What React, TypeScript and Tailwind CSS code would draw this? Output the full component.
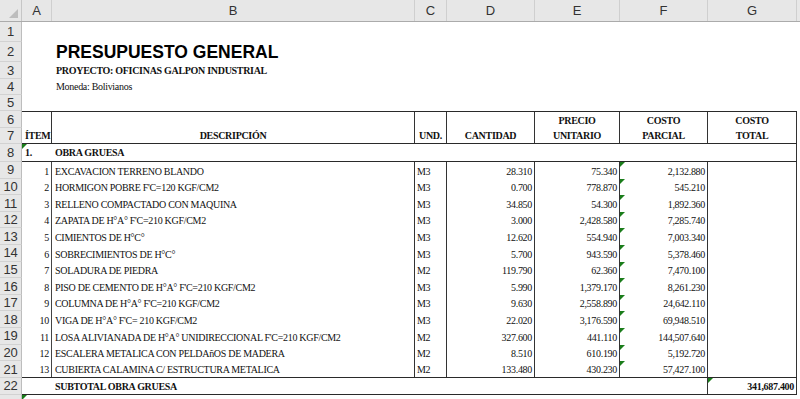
import React from 'react';

type Item = [number, string, string, string, string, string];

const items: Item[] = [
  [1, 'EXCAVACION TERRENO BLANDO', 'M3', '28.310', '75.340', '2,132.880'],
  [2, "HORMIGON POBRE F'C=120 KGF/CM2", 'M3', '0.700', '778.870', '545.210'],
  [3, 'RELLENO COMPACTADO CON MAQUINA', 'M3', '34.850', '54.300', '1,892.360'],
  [4, "ZAPATA DE H°A° F'C=210 KGF/CM2", 'M3', '3.000', '2,428.580', '7,285.740'],
  [5, 'CIMIENTOS DE H°C°', 'M3', '12.620', '554.940', '7,003.340'],
  [6, 'SOBRECIMIENTOS DE H°C°', 'M3', '5.700', '943.590', '5,378.460'],
  [7, 'SOLADURA DE PIEDRA', 'M2', '119.790', '62.360', '7,470.100'],
  [8, "PISO DE CEMENTO DE H°A° F'C=210 KGF/CM2", 'M3', '5.990', '1,379.170', '8,261.230'],
  [9, "COLUMNA DE H°A° F'C=210 KGF/CM2", 'M3', '9.630', '2,558.890', '24,642.110'],
  [10, "VIGA DE H°A° F'C= 210 KGF/CM2", 'M3', '22.020', '3,176.590', '69,948.510'],
  [11, "LOSA ALIVIANADA DE H°A° UNIDIRECCIONAL F'C=210 KGF/CM2", 'M2', '327.600', '441.110', '144,507.640'],
  [12, 'ESCALERA METALICA CON PELDAñOS DE MADERA', 'M2', '8.510', '610.190', '5,192.720'],
  [13, 'CUBIERTA CALAMINA C/ ESTRUCTURA METALICA', 'M2', '133.480', '430.230', '57,427.100'],
];

function Tri() {
  return (
    <span className="absolute left-0 top-0 h-0 w-0 border-t-[5px] border-r-[5px] border-t-[#1a7d1a] border-r-transparent" />
  );
}

function RH({ n }: { n?: number }) {
  return (
    <div className="w-[22px] shrink-0 flex items-center justify-center bg-[#e7e7e7] border-r border-b border-r-[#bdbdbd] border-b-[#d2d2d2] text-[13px] leading-none text-[#333] font-['Liberation_Sans',sans-serif]">
      {n}
    </div>
  );
}

const cols = ['A', 'B', 'C', 'D', 'E', 'F', 'G'];
const colW = ['w-[30px]', 'w-[363px]', 'w-[32px]', 'w-[88px]', 'w-[85px]', 'w-[88px]', 'w-[89px]'];

export default function App() {
  return (
    <div className="w-[800px] h-[399px] overflow-hidden bg-white text-[#111] font-['Liberation_Serif',serif] text-[10px] tracking-[-0.3px]">
      {/* column headers */}
      <div className="flex h-[22px] bg-[#e7e7e7] border-b border-[#ababab] font-['Liberation_Sans',sans-serif] text-[13px] text-[#333] tracking-normal">
        <div className="relative w-[22px] shrink-0 border-r border-[#c6c6c6]">
          <span className="absolute right-[3px] bottom-[3px] h-0 w-0 border-b-[9px] border-l-[9px] border-b-[#bdbdbd] border-l-transparent" />
        </div>
        {cols.map((c, i) => (
          <div key={c} className={`${colW[i]} shrink-0 flex items-center justify-center border-r border-[#cfcfcf]`}>
            {c}
          </div>
        ))}
        <div className="flex-1" />
      </div>

      {/* row 1 */}
      <div className="flex h-[20px]">
        <RH n={1} />
        <div className="flex-1" />
      </div>
      {/* row 2 */}
      <div className="flex h-[20px]">
        <RH n={2} />
        <div className="w-[30px] shrink-0" />
        <div className="flex items-center pl-[4px] whitespace-nowrap font-['Liberation_Sans',sans-serif] font-bold text-[17.5px] tracking-normal text-black">
          PRESUPUESTO GENERAL
        </div>
      </div>
      {/* row 3 */}
      <div className="flex h-[17px]">
        <RH n={3} />
        <div className="w-[30px] shrink-0" />
        <div className="flex items-center pl-[4px] whitespace-nowrap font-bold leading-[12px]">
          PROYECTO: OFICINAS GALPON INDUSTRIAL
        </div>
      </div>
      {/* row 4 */}
      <div className="flex h-[16px]">
        <RH n={4} />
        <div className="w-[30px] shrink-0" />
        <div className="flex items-center pl-[4px] whitespace-nowrap leading-[12px]">Moneda: Bolivianos</div>
      </div>
      {/* row 5 */}
      <div className="flex h-[16px]">
        <RH n={5} />
        <div className="flex-1" />
      </div>
      {/* row 6 */}
      <div className="flex h-[17px]">
        <RH n={6} />
        <div className="flex border-t border-[#2a2a2a] font-bold leading-[12px]">
          <div className="w-[30px] border-r border-[#333]" />
          <div className="w-[363px] border-r border-[#333]" />
          <div className="w-[32px] border-r border-[#333]" />
          <div className="w-[88px] border-r border-[#333]" />
          <div className="w-[85px] border-r border-[#333] flex items-end justify-center pb-[1px]">PRECIO</div>
          <div className="w-[88px] border-r border-[#333] flex items-end justify-center pb-[1px]">COSTO</div>
          <div className="w-[89px] border-r border-[#333] flex items-end justify-center pb-[1px]">COSTO</div>
        </div>
      </div>
      {/* row 7 */}
      <div className="flex h-[16px]">
        <RH n={7} />
        <div className="flex border-b border-[#2a2a2a] font-bold leading-[12px]">
          <div className="w-[30px] border-r border-[#333] flex items-end pl-[3px] pb-[1px]">ÍTEM</div>
          <div className="w-[363px] border-r border-[#333] flex items-end justify-center pb-[1px]">DESCRIPCIÓN</div>
          <div className="w-[32px] border-r border-[#333] flex items-end justify-center pb-[1px]">UND.</div>
          <div className="w-[88px] border-r border-[#333] flex items-end justify-center pb-[1px]">CANTIDAD</div>
          <div className="w-[85px] border-r border-[#333] flex items-end justify-center pb-[1px]">UNITARIO</div>
          <div className="w-[88px] border-r border-[#333] flex items-end justify-center pb-[1px]">PARCIAL</div>
          <div className="w-[89px] border-r border-[#333] flex items-end justify-center pb-[1px]">TOTAL</div>
        </div>
      </div>
      {/* row 8 */}
      <div className="flex h-[18px]">
        <RH n={8} />
        <div className="flex border-b border-[#2a2a2a] font-bold leading-[12px]">
          <div className="relative w-[30px] flex items-end pl-[3px] pb-[2px]">
            <Tri />
            1.
          </div>
          <div className="w-[656px] flex items-end pl-[3px] pb-[2px]">OBRA GRUESA</div>
          <div className="w-[89px] border-r border-[#333]" />
        </div>
      </div>
      {/* rows 9-21 */}
      {items.map((it, i) => (
        <div key={it[0]} className="flex h-[16.62px]">
          <RH n={9 + i} />
          <div className={`flex leading-[12px] ${i === items.length - 1 ? 'border-b border-[#2a2a2a]' : ''}`}>
            <div className="w-[30px] border-r border-[#444] flex items-end justify-end pr-[2px] pb-[1px]">{it[0]}</div>
            <div className="w-[363px] border-r border-[#333] flex items-end pl-[3px] pb-[1px] whitespace-nowrap">{it[1]}</div>
            <div className="w-[32px] border-r border-[#333] flex items-end pl-[2px] pb-[1px]">{it[2]}</div>
            <div className="w-[88px] border-r border-[#333] flex items-end justify-end pr-[2px] pb-[1px]">{it[3]}</div>
            <div className="w-[85px] border-r border-[#333] flex items-end justify-end pr-[2px] pb-[1px]">{it[4]}</div>
            <div className="relative w-[88px] border-r border-[#333] flex items-end justify-end pr-[2px] pb-[1px]">
              <Tri />
              {it[5]}
            </div>
            <div className="w-[89px] border-r border-[#333]" />
          </div>
        </div>
      ))}
      {/* row 22 */}
      <div className="flex h-[17px]">
        <RH n={22} />
        <div className="flex border-b border-[#2a2a2a] font-bold leading-[12px]">
          <div className="w-[30px]" />
          <div className="w-[656px] border-r border-[#333] flex items-end pl-[3px] pb-[1px] whitespace-nowrap">SUBTOTAL OBRA GRUESA</div>
          <div className="relative w-[89px] border-r border-[#333] flex items-end justify-end pr-[2px] pb-[1px]">
            <Tri />
            341,687.400
          </div>
        </div>
      </div>
      {/* row 23 (only its top edge shows) */}
      <div className="flex h-[20px]">
        <RH />
        <div className="relative w-[30px]">
          <Tri />
        </div>
      </div>
    </div>
  );
}
